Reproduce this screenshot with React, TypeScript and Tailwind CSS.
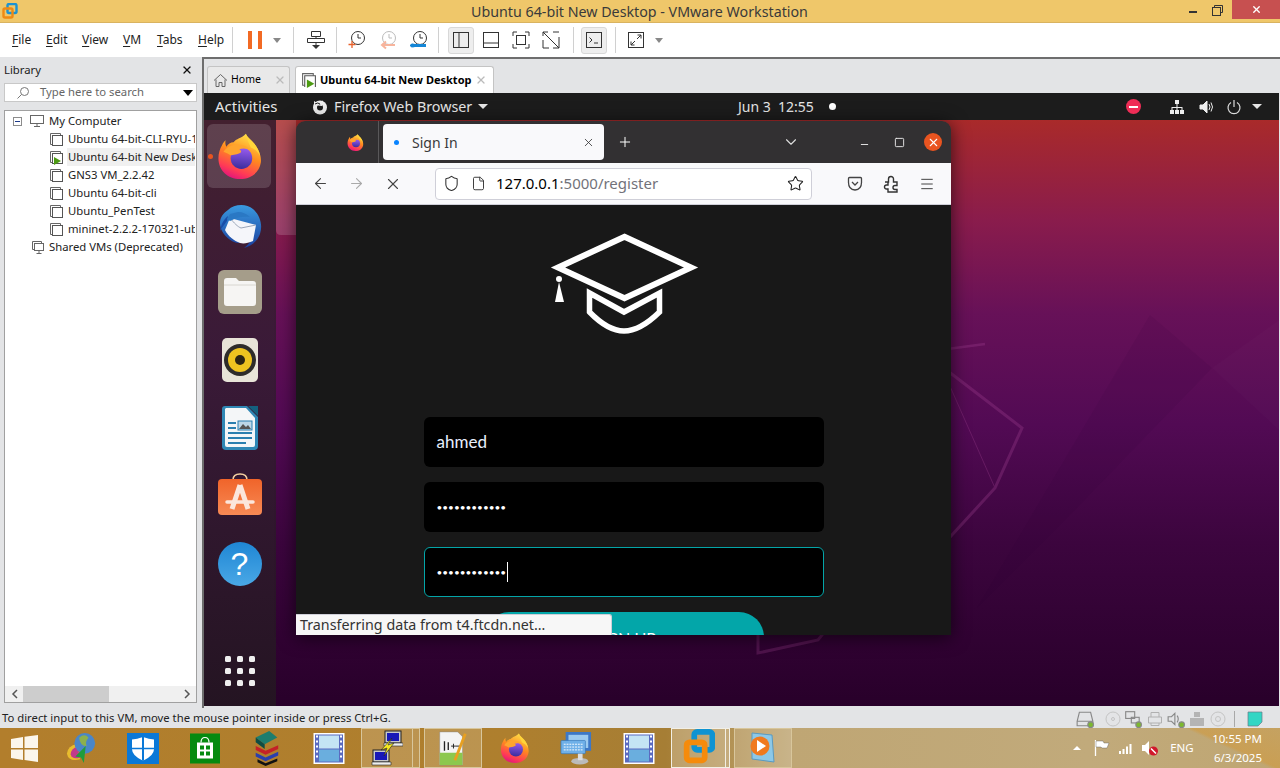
import React from "react";
import { ArrowLeft, ArrowRight, X, Star, Shield, File, Menu, ChevronDown, Plus, Minus, Square } from "lucide-react";

const UI = "font-['Noto_Sans','Open_Sans',sans-serif]";

function FirefoxLogo({ size }: { size: number }) {
  return (
    <svg width={size} height={size} viewBox="0 0 64 64" className="shrink-0">
      <defs>
        <linearGradient id="ffa" x1="0.7" y1="0" x2="0.3" y2="1">
          <stop offset="0" stopColor="#ffe14a" />
          <stop offset="0.45" stopColor="#ff8a1f" />
          <stop offset="0.8" stopColor="#ff3a56" />
          <stop offset="1" stopColor="#e0127f" />
        </linearGradient>
        <linearGradient id="ffb" x1="0.5" y1="0" x2="0.4" y2="1">
          <stop offset="0" stopColor="#9a5cf0" />
          <stop offset="1" stopColor="#3a2d9c" />
        </linearGradient>
      </defs>
      <path d="M40 1c3 6 8 9 12 14 6 8 10 17 9 26-2 14-14 23-29 23C15 64 2 52 2 35c0-7 2-13 5-18 1-3 3-5 5-7-1 4 0 7 1 9 2-3 6-6 10-6 3-5 12-6 17-12z" fill="url(#ffa)" />
      <circle cx="34" cy="35" r="15" fill="url(#ffb)" />
      <path d="M9 26c4-6 11-10 20-10 7 0 14 3 19 9-6-4-13-4-17-2 3 1 3 3 2 4-4 3-11 3-14 4-3-2-7-4-10-5z" fill="#ffa52e" />
      <path d="M40 1c3 6 8 9 12 14 4 5 7 11 8 17-3-6-8-10-13-12-3-7-6-12-7-19z" fill="#ffd53a" />
    </svg>
  );
}

function VmIcon({ play }: { play?: boolean }) {
  return (
    <svg width="15" height="15" viewBox="0 0 15 15" className="shrink-0">
      <path d="M3.5 12.5H1.500V1.500H11.500V3.500" fill="none" stroke="#666" />
      <rect x="3.500" y="3.500" width="10" height="10" fill="#fff" stroke="#555" />
      {play && <path d="M5 7l7 4-7 4z" fill="#4c9a12" />}
    </svg>
  );
}

function TreeRow({ label, play, hi }: { label: string; play?: boolean; hi?: boolean }) {
  return (
    <div className="flex h-[18px] items-center pl-[44px]">
      <VmIcon play={play} />
      <div className={`ml-[3px] flex h-full w-[128px] items-center overflow-hidden whitespace-nowrap pl-[1px] ${hi ? "bg-[#f0f0f0]" : ""}`}>{label}</div>
    </div>
  );
}

function Sep({ cls = "mx-[10px]" }: { cls?: string }) {
  return <div className={`h-[26px] w-px shrink-0 bg-[#d0d0d0] ${cls}`} />;
}

function Caret() {
  return <div className="h-0 w-0 border-x-[4px] border-t-[5px] border-x-transparent border-t-[#888]" />;
}

function Clock({ color, tool }: { color: string; tool: "plus" | "back" | "wrench" }) {
  return (
    <svg width="20" height="20" viewBox="0 0 20 20" className="shrink-0">
      <circle cx="11" cy="8" r="6.500" fill="none" stroke={tool === "back" ? "#bbb" : "#333"} />
      <path d="M11 4v4h3" fill="none" stroke={tool === "back" ? "#bbb" : "#333"} />
      {tool === "plus" && <path d="M5 11v7M1.500 14.500h7" stroke={color} strokeWidth="1.300" />}
      {tool === "back" && <path d="M17 15H5m3-3.500L4 15l4 3.500" fill="none" stroke={color} strokeWidth="2" />}
      {tool === "wrench" && <path d="M1 15c2-2 3-1.500 5-1h11v3H6c-2 .5-3 1-5-1z" fill={color} />}
    </svg>
  );
}

function ViewBtn({ active, children }: { active?: boolean; children: React.ReactNode }) {
  return (
    <div className={`flex h-[27px] w-[26px] shrink-0 items-center justify-center rounded-[3px] ${active ? "border border-[#d8d8d8] bg-[#eeeeee]" : ""}`}>
      <svg width="18" height="18" viewBox="0 0 18 18" fill="none" stroke="#333">{children}</svg>
    </div>
  );
}

function TitleBar() {
  return (
    <div className="flex h-[23px] shrink-0 items-start border-b border-[#d9b360] bg-[#efc76a]">
      <svg width="16" height="16" viewBox="0 0 16 16" className="ml-[2px] mt-[3px] shrink-0">
        <rect x="5.500" y="1" width="9" height="9" rx="1.500" fill="none" stroke="#1c93d2" strokeWidth="2.400" />
        <rect x="1.500" y="5.500" width="9" height="9" rx="1.500" fill="none" stroke="#f08a12" strokeWidth="2.400" />
      </svg>
      <div className={`${UI} flex-1 pl-[72px] text-center text-[14.250px] leading-[23px] text-[#3a3a3a]`}>Ubuntu 64-bit New Desktop - VMware Workstation</div>
      <div className="flex items-start">
        <div className="mr-[15px] mt-[11px] h-[2px] w-[8px] bg-[#333]" />
        <svg width="11" height="11" viewBox="0 0 11 11" className="mr-[9px] mt-[5px]" fill="none" stroke="#333">
          <path d="M2.500 2.500V.5h8v7H8.500" />
          <rect x=".5" y="2.500" width="8" height="8" />
        </svg>
        <div className="flex h-[19px] w-[48px] items-center justify-center bg-[#c75050]">
          <X size={11} color="#fff" strokeWidth={3} />
        </div>
      </div>
    </div>
  );
}

function Toolbar() {
  const menus: [string, string][] = [["File", "w-[34px]"], ["Edit", "w-[36px]"], ["View", "w-[41px]"], ["VM", "w-[34px]"], ["Tabs", "w-[41px]"], ["Help", "w-[37px]"]];
  return (
    <div className="flex h-[34px] shrink-0 items-center bg-white pl-[12px]">
      <div className={`${UI} flex text-[12px] text-[#222]`}>
        {menus.map(([m, w]) => (
          <div key={m} className={w}>
            <span className="underline decoration-1 underline-offset-2 [text-decoration-skip-ink:none]">{m[0]}</span>
            {m.slice(1)}
          </div>
        ))}
      </div>
      <div className="mx-[-3px] h-[26px] w-px shrink-0 bg-[#d0d0d0]" />
      <div className="ml-[18px] flex h-[18px] gap-[6px]">
        <div className="w-[4px] bg-[#f26a24]" />
        <div className="w-[4px] bg-[#f26a24]" />
      </div>
      <div className="ml-[11px]"><Caret /></div>
      <Sep cls="ml-[12px] mr-[10px]" />
      <svg width="20" height="20" viewBox="0 0 20 20" className="ml-[2px] shrink-0">
        <path d="M5.500 1.500h9v5h-9zM1.500 8.500h17v4h-17zM10 6.500v2M10 12.500v4" fill="none" stroke="#333" />
        <path d="M6 15h8l-4 4z" fill="#333" />
      </svg>
      <Sep />
      <div className="flex items-center gap-[11px]">
        <Clock color="#e8622c" tool="plus" />
        <Clock color="#f7b49c" tool="back" />
        <Clock color="#1586d6" tool="wrench" />
      </div>
      <Sep cls="ml-[9px] mr-[9px]" />
      <div className="flex items-center gap-[4px]">
        <ViewBtn active><rect x="1.500" y="1.500" width="15" height="15" /><path d="M7 1.500v15" /></ViewBtn>
        <ViewBtn><rect x="1.500" y="1.500" width="15" height="15" /><path d="M1.500 12h15" /></ViewBtn>
        <ViewBtn><path d="M1 5V1h4M13 1h4v4M17 13v4h-4M5 17H1v-4" /><rect x="4.500" y="4.500" width="9" height="9" /></ViewBtn>
        <ViewBtn><path d="M1 5V1h5M17 6v11h-6M7 17H1V9M1 1l16 16M11 1h6" /></ViewBtn>
      </div>
      <Sep cls="ml-[9px] mr-[7px]" />
      <ViewBtn active><rect x="1.500" y="1.500" width="15" height="15" /><path d="M4.500 6.500l2.500 2.500-2.500 2.500M9 12h4" /></ViewBtn>
      <div className="mx-[8px] h-[26px] w-px shrink-0 bg-[#d0d0d0]" />
      <svg width="18" height="18" viewBox="0 0 18 18" fill="none" stroke="#333" className="ml-[3px] shrink-0">
        <rect x="1.500" y="1.500" width="15" height="15" />
        <path d="M4 14l4-4M4 10.500V14h3.500M14 4l-4 4M10.500 4H14v3.500" />
      </svg>
      <div className="ml-[10px]"><Caret /></div>
    </div>
  );
}

function Library() {
  return (
    <div className={`${UI} flex w-[197px] shrink-0 flex-col pb-[5px] pl-[4px] text-[11.300px] text-[#222]`}>
      <div className="flex h-[26px] shrink-0 items-center justify-between pr-[4px]">
        <span>Library</span>
        <X size={12} color="#111" strokeWidth={2.500} />
      </div>
      <div className="flex h-[19px] shrink-0 items-center border border-[#c8c8c8] bg-white">
        <svg width="14" height="14" viewBox="0 0 14 14" fill="none" stroke="#777" className="ml-[11px]"><circle cx="8.500" cy="5.500" r="4" /><path d="M5.500 8.500L1.500 12.500" /></svg>
        <span className="ml-[10px] flex-1 text-[#666]">Type here to search</span>
        <div className="mr-[3px] h-0 w-0 border-x-[5px] border-t-[6px] border-x-transparent border-t-black" />
      </div>
      <div className="mt-[8px] flex min-h-0 flex-1 flex-col border border-[#a0a0a0] bg-white">
        <div className="flex-1 pt-[1px]">
          <div className="flex h-[18px] items-center">
            <div className="ml-[8px] flex h-[9px] w-[9px] items-center justify-center border border-[#8c8c8c]"><div className="h-px w-[5px] bg-[#1c3a8a]" /></div>
            <svg width="16" height="14" viewBox="0 0 16 14" fill="none" stroke="#666" className="ml-[7px]"><rect x="1.500" y="1.500" width="13" height="8" /><path d="M5 12.500h6M8 9.500v3" /></svg>
            <span className="ml-[4px]">My Computer</span>
          </div>
          <TreeRow label="Ubuntu 64-bit-CLI-RYU-1" />
          <TreeRow label="Ubuntu 64-bit New Desktop" play hi />
          <TreeRow label="GNS3 VM_2.2.42" />
          <TreeRow label="Ubuntu 64-bit-cli" />
          <TreeRow label="Ubuntu_PenTest" />
          <TreeRow label="mininet-2.2.2-170321-ubuntu" />
          <div className="flex h-[18px] items-center pl-[26px]">
            <svg width="15" height="15" viewBox="0 0 15 15" fill="none" stroke="#666"><path d="M3.500 9.500h-2v-8h9v2" /><rect x="3.500" y="3.500" width="9" height="7" fill="#fff" /><path d="M5.500 13.500h5M8 10.500v3" /></svg>
            <span className="ml-[3px]">Shared VMs (Deprecated)</span>
          </div>
        </div>
        <div className="flex h-[16px] shrink-0 items-center bg-[#f0f0f0]">
          <svg width="8" height="10" viewBox="0 0 8 10" fill="none" stroke="#555" strokeWidth="1.500" className="ml-[6px]"><path d="M6 1L2 5l4 4" /></svg>
          <div className="ml-[4px] h-full w-[86px] bg-[#cdcdcd]" />
          <div className="flex-1" />
          <svg width="8" height="10" viewBox="0 0 8 10" fill="none" stroke="#555" strokeWidth="1.500" className="mr-[5px]"><path d="M2 1l4 4-4 4" /></svg>
        </div>
      </div>
    </div>
  );
}

function Tabs() {
  return (
    <div className={`${UI} flex h-[34px] shrink-0 items-end pl-[3px] text-[11px] text-black`}>
      <div className="flex h-[27px] w-[83px] items-center rounded-t-[3px] border border-b-0 border-[#c4c4c4] bg-[#e9e9e9] pl-[5px]">
        <svg width="15" height="15" viewBox="0 0 15 15" fill="none" stroke="#666"><path d="M1 7.500L7.500 1.500 14 7.500M3 6.500v7h3v-4h3v4h3v-7" /></svg>
        <span className="ml-[3px] text-[10.500px]">Home</span>
        <X size={12} color="#bbb" strokeWidth={2.500} className="ml-[13px]" />
      </div>
      <div className="ml-[5px] flex h-[27px] w-[199px] items-center rounded-t-[3px] border border-b-0 border-[#c4c4c4] bg-white pl-[5px]">
        <svg width="16" height="16" viewBox="0 0 15 15" className="shrink-0"><path d="M3.500 12.500H1.500V1.500H11.500V3.500" fill="none" stroke="#666" /><path d="M3.500 14V3.500h10V14" fill="none" stroke="#555" /><path d="M5.500 7l7 4-7 4z" fill="#4c9a12" /></svg>
        <span className="ml-[3px] whitespace-nowrap font-bold">Ubuntu 64-bit New Desktop</span>
        <X size={12} color="#bbb" strokeWidth={2.500} className="ml-[4px] shrink-0" />
      </div>
    </div>
  );
}

function GnomePanel() {
  return (
    <div className={`${UI} flex h-[27px] shrink-0 items-center bg-[#1c1c1c] text-[14.300px] text-[#e6e6e6]`}>
      <span className="ml-[11px] w-[97px] text-[15px]">Activities</span>
      <svg width="16" height="16" viewBox="0 0 16 16" className="shrink-0"><circle cx="8" cy="8.500" r="7" fill="#eee" /><circle cx="8" cy="8.500" r="3" fill="#1c1c1c" /><path d="M2 2l6 4 3-5-1 6-8-1z" fill="#eee" /><path d="M3 5q3-2 5 0" stroke="#1c1c1c" fill="none" /></svg>
      <span className="ml-[6px] w-[144px] whitespace-nowrap">Firefox Web Browser</span>
      <div className="h-0 w-0 border-x-[5px] border-t-[5px] border-x-transparent border-t-[#e6e6e6]" />
      <span className="ml-[250px] w-[91px] whitespace-nowrap text-[14px]">Jun 3 &nbsp;12:55</span>
      <div className="h-[7px] w-[7px] rounded-full bg-white" />
      <div className="ml-[290px] flex h-[15px] w-[15px] items-center justify-center rounded-full bg-[#ef2d56]"><div className="h-[2px] w-[9px] bg-white" /></div>
      <svg width="16" height="16" viewBox="0 0 16 16" fill="#eee" className="ml-[28px] shrink-0"><path d="M6 1h4v4H6zM1 11h4v4H1zM6 11h4v4H6zM11 11h4v4h-4zM7.500 5h1v3h5v3h-1V9H8.500v2h-1V9H3.500v2h-1V8h5z" /></svg>
      <svg width="16" height="16" viewBox="0 0 16 16" className="ml-[14px] shrink-0" fill="none" stroke="#eee"><path d="M1 6h3l4-4v12l-4-4H1z" fill="#eee" /><path d="M10 5q2 3 0 6M12 3.500q3 4.500 0 9" /></svg>
      <svg width="16" height="16" viewBox="0 0 16 16" className="ml-[11px] shrink-0" fill="none" stroke="#ddd" strokeWidth="1.200"><path d="M5 3.500a6 6 0 1 0 6 0M8 1v7" /></svg>
      <div className="ml-[10px] h-0 w-0 border-x-[5px] border-t-[5px] border-x-transparent border-t-[#e6e6e6]" />
    </div>
  );
}

function DockSlot({ h, children, active }: { h: string; children: React.ReactNode; active?: boolean }) {
  return (
    <div className={`relative flex w-full items-center justify-center pr-[1px] ${h}`}>
      {active && <div className="absolute left-[3px] top-0 h-[64px] w-[64px] rounded-[6px] bg-[#ffffff26]" />}
      {active && <div className="absolute left-[4px] top-[30px] h-[5px] w-[5px] rounded-full bg-[#e95420]" />}
      <div className="relative">{children}</div>
    </div>
  );
}

function Dock() {
  return (
    <div className="flex w-[72px] shrink-0 flex-col items-center bg-[linear-gradient(180deg,#43202f_0%,#3a1a38_40%,#241422_100%)] pt-[4px]">
      <DockSlot h="h-[64px]" active><FirefoxLogo size={46} /></DockSlot>
      <DockSlot h="h-[76px]">
        <svg width="48" height="48" viewBox="0 0 48 48">
          <defs><linearGradient id="tb" x1="0" y1="0" x2="0" y2="1"><stop offset="0" stopColor="#3a9ae0" /><stop offset="1" stopColor="#1a3f9e" /></linearGradient></defs>
          <path d="M12 8C18 2 30 1 37 7c7 6 10 16 7 25-3 8-10 13-16 14 5-4 10-10 10-18-3 6-10 11-16 13-7-1-14-7-17-14C2 18 6 12 12 8z" fill="url(#tb)" />
          <path d="M4 29c1-6 3-11 8-15l-1 5c-2 3-5 6-7 10z" fill="#1a4ea8" />
          <path d="M14 16l26 7-3 16c-5 2-9 3-13 2-6-2-12-7-15-13l5-12z" fill="#f5f6fa" />
          <path d="M14 16c4 5 8 9 11 10l15-3" fill="none" stroke="#9aa6b8" />
          <path d="M11 17l3-5 8-2c5 0 9 2 12 5-7-1-13 0-20 4z" fill="#2a78c4" />
        </svg>
      </DockSlot>
      <DockSlot h="h-[56px]">
        <div className="flex h-[44px] w-[44px] items-center justify-center rounded-[6px] bg-[#a59d8a]">
          <svg width="32" height="28" viewBox="0 0 32 28"><path d="M0 3q0-3 3-3h9l3 3h14q3 0 3 3v19q0 3-3 3H3q-3 0-3-3z" fill="#f6f5f3" /><path d="M0 7h32" stroke="#d8d6d0" /></svg>
        </div>
      </DockSlot>
      <DockSlot h="h-[80px]">
        <div className="flex h-[44px] w-[36px] items-center justify-center rounded-[5px] bg-[#e8e4d8]">
          <div className="flex h-[32px] w-[32px] items-center justify-center rounded-full bg-[#2e2c2a]">
            <div className="flex h-[24px] w-[24px] items-center justify-center rounded-full bg-[#eec320]"><div className="h-[10px] w-[10px] rounded-full bg-[#2b2414]" /></div>
          </div>
        </div>
      </DockSlot>
      <DockSlot h="h-[56px]">
        <svg width="36" height="44" viewBox="0 0 36 44">
          <path d="M3 0h22l11 11v29q0 4-4 4H4q-4 0-4-4V3q0-3 3-3z" fill="#2f87b5" />
          <path d="M4 2h20l9 10v27q0 2-2 2H5q-2 0-2-2V3z" fill="#f4f6f8" />
          <path d="M26 0h10v10z" fill="#14607f" />
          <path d="M6 16h8v2H6zM6 21h8v2H6zM6 26h24v2H6zM6 31h24v2H6zM6 36h18v2H6z" fill="#2a7fb0" />
          <rect x="16" y="15" width="14" height="9" fill="#bcd7e8" stroke="#2a7fb0" /><path d="M17 23l4-5 3 3 2-2 3 4z" fill="#555" />
        </svg>
      </DockSlot>
      <DockSlot h="h-[78px]">
        <svg width="44" height="44" viewBox="0 0 44 44">
          <defs><linearGradient id="sw" x1="0" y1="0" x2="0" y2="1"><stop offset="0" stopColor="#f0642a" /><stop offset="1" stopColor="#f78a55" /></linearGradient></defs>
          <path d="M15 7q0-6 7-6t7 6" fill="none" stroke="#f4d0a0" strokeWidth="1.600" />
          <rect x="0" y="6" width="44" height="36" rx="4" fill="url(#sw)" />
          <path d="M22 12l-8 24M22 12l8 24" stroke="#fbe6dc" strokeWidth="5" fill="none" />
          <path d="M9 29h26" stroke="#fbe6dc" strokeWidth="3.500" strokeLinecap="round" />
        </svg>
      </DockSlot>
      <DockSlot h="h-[60px]">
        <div className="flex h-[44px] w-[44px] items-center justify-center rounded-full bg-[linear-gradient(180deg,#1f86d4,#4aa8e6)] text-[32px] leading-none text-white font-['Liberation_Sans',sans-serif]">?</div>
      </DockSlot>
      <div className="mt-auto mb-[20px] mr-[1px] grid grid-cols-3 gap-x-[6px] gap-y-[6px]">
        {Array.from({ length: 9 }).map((_, i) => (
          <div key={i} className="h-[6px] w-[6px] rounded-[1.500px] bg-[#efefef]" />
        ))}
      </div>
    </div>
  );
}

function Wallpaper() {
  return (
    <svg className="absolute inset-0 h-full w-full" viewBox="276 120 1003 586" preserveAspectRatio="none">
      <path d="M1150 315L1212 368 1067 518 977 608z" fill="#2a0030" opacity=".08" />
      <path d="M1212 368L1279 320V430z" fill="#ffffff" opacity=".015" />
      <g fill="none" stroke="#a04090" opacity=".32">
        <path d="M940 350L985 344" strokeWidth="2.500" />
        <path d="M940 365L1022 428 995 488 940 548" strokeWidth="3" />
        <path d="M945 375L995 488" strokeWidth="1" />
      </g>
      <path d="M758 630V653L818 640 826 630" fill="none" stroke="#a04090" opacity=".28" strokeWidth="3" />
      <path d="M276 120h20v115h-15q-5 0-5-5z" fill="#ffffff" opacity=".17" />
    </svg>
  );
}

function FirefoxWindow() {
  return (
    <div className="absolute left-[20px] top-[1px] flex h-[514px] w-[655px] flex-col overflow-hidden rounded-t-[9px] shadow-[0_2px_18px_rgba(0,0,0,0.65)]">
      <div className={`${UI} flex h-[42px] shrink-0 items-center bg-[#323032]`}>
        <div className="flex h-full w-[83px] items-center justify-end border-r border-[#5a585a] pr-[14px]">
          <FirefoxLogo size={17} />
        </div>
        <div className="ml-[4px] flex h-[36px] w-[221px] items-center rounded-[4px] bg-[#f9f9fb] pl-[11px] text-[14px] text-[#3a3a3a]">
          <div className="h-[5px] w-[5px] rounded-full bg-[#0a84ff]" />
          <span className="ml-[13px] flex-1">Sign In</span>
          <X size={13} color="#333" strokeWidth={1.500} className="mr-[9px]" />
        </div>
        <Plus size={16} color="#fff" strokeWidth={1.500} className="ml-[13px]" />
        <ChevronDown size={18} color="#ddd" strokeWidth={1.500} className="ml-[149px]" />
        <Minus size={11} color="#eee" strokeWidth={2} className="ml-[59px] mt-[5px]" />
        <Square size={11} color="#eee" strokeWidth={2} className="ml-[24px]" />
        <div className="ml-[19px] flex h-[18px] w-[18px] items-center justify-center rounded-full bg-[#e95420]">
          <X size={13} color="#fff" strokeWidth={2} />
        </div>
      </div>
      <div className={`${UI} flex h-[42px] shrink-0 items-center border-b border-[#cfcfd8] bg-[#f9f9fb]`}>
        <ArrowLeft size={17} color="#444" strokeWidth={1.500} className="ml-[16px]" />
        <ArrowRight size={17} color="#aaa" strokeWidth={1.500} className="ml-[19px]" />
        <X size={18} color="#444" strokeWidth={1.500} className="ml-[19px]" />
        <div className="ml-[33px] flex h-[32px] w-[377px] items-center rounded-[4px] border border-[#cfcfd8] bg-white pl-[7px]">
          <Shield size={17} color="#333" strokeWidth={1.500} />
          <File size={15} color="#333" strokeWidth={1.500} className="ml-[11px]" />
          <span className="ml-[10px] text-[15px] text-black">127.0.0.1<span className="text-[#72727a]">:5000/register</span></span>
          <Star size={17} color="#222" strokeWidth={1.500} className="ml-auto mr-[7px]" />
        </div>
        <svg width="16" height="16" viewBox="0 0 16 16" fill="none" stroke="#444" strokeWidth="1.300" className="ml-[35px]"><path d="M2.500 1.500h11q1 0 1 1v4q0 7-6.500 7.500Q1.500 13.500 1.500 6.500v-4q0-1 1-1z" /><path d="M5 6l3 3 3-3" /></svg>
        <svg width="17" height="18" viewBox="0 0 17 18" fill="none" stroke="#333" strokeWidth="1.400" className="ml-[20px]"><path d="M2 7h3.500V4a2.500 2.500 0 0 1 5 0v3H14v3.500h-2a2 2 0 0 0 0 4h2V17H5v-3H3.500a2 2 0 0 1 0-4H5V7" /></svg>
        <Menu size={16} color="#444" strokeWidth={1.500} className="ml-[19px]" />
      </div>
      <div className="relative flex min-h-0 flex-1 flex-col items-center overflow-hidden bg-[#181818] pt-[27px] font-['Lato',sans-serif]">
        <svg width="151" height="102" viewBox="548 232 151 102" className="shrink-0">
          <path d="M624.500 236.800L691 267.500 624.500 298.200 558 267.500z" fill="none" stroke="#fff" strokeWidth="6" />
          <circle cx="559" cy="279" r="3" fill="#fff" />
          <path d="M559 282L555 302H564z" fill="#fff" />
          <path d="M589.500 293L624 312 659.500 293V312Q640 331 624 331 608 331 589.500 312z" fill="none" stroke="#fff" strokeWidth="5.500" />
        </svg>
        <div className="mt-[83px] flex h-[50px] w-[400px] shrink-0 items-center rounded-[6px] bg-black pl-[13px] text-[17px] text-[#e8f0fe]">ahmed</div>
        <div className="mt-[15px] flex h-[50px] w-[400px] shrink-0 items-center rounded-[6px] bg-black pl-[13px] text-[10px] text-white">••••••••••••</div>
        <div className="mt-[15px] flex h-[50px] w-[400px] shrink-0 items-center rounded-[6px] border border-[#04a5a8] bg-black pl-[12px] text-[10px] text-white">
          <span>••••••••••••</span>
          <div className="ml-[1px] h-[20px] w-px bg-white" />
        </div>
        <div className="mt-[15px] flex h-[50px] w-[280px] shrink-0 justify-center rounded-[30px] bg-[#03a6a9] pl-[2px] pt-[14px] text-[16px] text-white">SIGN UP</div>
        <div className={`${UI} absolute bottom-0 left-0 flex h-[21px] w-[316px] items-center rounded-tr-[3px] border-r border-t border-[#cfcfd8] bg-[#f7f7f7] pl-[4px] text-[14.300px] text-[#333]`}>Transferring data from t4.ftcdn.net…</div>
      </div>
    </div>
  );
}

function StatusIcons() {
  const dot = <circle cx="13" cy="13" r="2.500" fill="#7cb82f" />;
  return (
    <div className="mt-[2px] flex items-center pr-[17px]">
      <svg width="18" height="18" viewBox="0 0 16 16" fill="none" stroke="#888"><path d="M3 2h10l2 8v4H1v-4zM1 10h14" />{dot}</svg>
      <svg width="16" height="16" viewBox="0 0 16 16" fill="none" stroke="#c4c4c4" className="ml-[11px]"><circle cx="8" cy="8" r="7" /><circle cx="8" cy="8" r="1.500" /></svg>
      <svg width="18" height="18" viewBox="0 0 16 16" fill="none" stroke="#888" className="ml-[3px]"><rect x="1.500" y="1.500" width="8" height="6" /><rect x="6.500" y="6.500" width="7" height="5" />{dot}</svg>
      <svg width="16" height="16" viewBox="0 0 16 16" fill="none" stroke="#b0b0b0" className="ml-[5px]"><path d="M4 6V1.500h8V6M1.500 6h13v6h-13zM4 12v2.500h8V12" /></svg>
      <svg width="18" height="18" viewBox="0 0 16 16" fill="none" stroke="#888" className="ml-[4px]"><path d="M1 6h3l3-3v10l-3-3H1zM9 5q2 3 0 6" />{dot}</svg>
      <svg width="16" height="16" viewBox="0 0 16 16" fill="#b4b4b4" className="ml-[4px]"><path d="M5 1h6v5H5zM1 7h14v8H1z" /></svg>
      <svg width="16" height="16" viewBox="0 0 16 16" fill="none" stroke="#c4c4c4" className="ml-[5px]"><circle cx="8" cy="8" r="7" /><circle cx="8" cy="8" r="2.500" /></svg>
      <div className="ml-[8px] h-[16px] w-px bg-[#a8a8a8]" />
      <svg width="16" height="16" viewBox="0 0 16 16" className="ml-[12px]"><path d="M1 1h14v10l-4 4H1z" fill="#33d6c4" stroke="#6a7a88" strokeWidth=".7" /></svg>
    </div>
  );
}

function StatusBar() {
  return (
    <div className={`${UI} flex h-[20px] shrink-0 items-center justify-between bg-[#e3e4e6] pl-[2px] text-[11.300px] text-[#222]`}>
      <span>To direct input to this VM, move the mouse pointer inside or press Ctrl+G.</span>
      <StatusIcons />
    </div>
  );
}

function Film({ cls }: { cls: string }) {
  return (
    <svg width="32" height="33" viewBox="0 0 32 32" className={`shrink-0 ${cls}`}>
      <rect x=".5" y=".5" width="31" height="31" fill="#fff" />
      <rect x="2" y="2" width="28" height="28" fill="#5a6ac0" />
      <rect x="6" y="3" width="20" height="13" fill="#c4e4f4" />
      <rect x="6" y="17" width="20" height="12" fill="#6aaede" />
      <path d="M3 4h2M3 9h2M3 14h2M3 19h2M3 24h2M27 4h2M27 9h2M27 14h2M27 19h2M27 24h2" stroke="#fff" strokeWidth="2" />
    </svg>
  );
}

function TaskBox({ w, extra, bright, children }: { w: string; extra?: string; bright?: boolean; children: React.ReactNode }) {
  const c = bright ? "border-[#f2efe6] bg-[#ffffff40]" : "border-[#d8c69c] bg-[#ffffff2a]";
  return (
    <div className="flex h-full shrink-0">
      <div className={`flex h-full items-center justify-center border ${c} ${w}`}>{children}</div>
      {extra && <div className={`h-full border-y border-r ${c} ${extra}`} />}
    </div>
  );
}

function Taskbar() {
  return (
    <div className={`${UI} relative flex h-[40px] shrink-0 items-center bg-[linear-gradient(90deg,#b27e2c_0%,#ae7f2e_40%,#a67e35_52%,#bfa674_62%,#c1aa7b_85%,#bfa672_100%)]`}>
      <svg width="27" height="27" viewBox="0 0 27 27" className="ml-[11px] shrink-0" fill="#fbf6ec"><path d="M0 4l12-2v11H0zM13.500 1.800L27 0v13H13.500zM0 14.500h12V25L0 23zM13.500 14.500H27V27l-13.500-2z" /></svg>
      <svg width="32" height="32" viewBox="0 0 34 34" className="ml-[27px] shrink-0">
        <path d="M2 23a11 11 0 0 1 10-10l4 16Q4 32 2 23z" fill="#e8bc2e" />
        <path d="M6 24a8 8 0 0 1 7-8l3 11Q8 30 6 24z" fill="#c13a8a" />
        <circle cx="21" cy="12" r="11" fill="#4a86c8" /><path d="M15 6q6-5 10 0-4 4-2 9-7 0-8-9z" fill="#8cb04e" />
        <path d="M22 15l-2 18-3-6-6-1z" fill="#1f9c3c" />
      </svg>
      <svg width="32" height="31" viewBox="0 0 32 38" preserveAspectRatio="none" className="ml-[30px] shrink-0">
        <rect width="32" height="38" fill="#0a78d7" />
        <path d="M16 5q6 3 11 3v12q0 8-11 14Q5 28 5 20V8q5 0 11-3z" fill="#fff" />
        <path d="M15 5h2v29h-2zM5 18h22v2H5z" fill="#0a78d7" />
      </svg>
      <svg width="30" height="31" viewBox="0 0 30 30" className="ml-[31px] shrink-0">
        <rect width="30" height="30" fill="#058a10" />
        <path d="M11 9q0-5 4-5t4 5" fill="none" stroke="#fff" strokeWidth="1.200" />
        <path d="M7 9h16v16H7z" fill="#fff" />
        <path d="M10 12h4v4h-4zM16 12h4v4h-4zM10 18h4v4h-4zM16 18h4v4h-4z" fill="#058a10" />
      </svg>
      <svg width="27" height="36" viewBox="0 0 30 38" preserveAspectRatio="none" className="ml-[33px] shrink-0">
        <path d="M3 8L18 1l9 7-14 7z" fill="#1d7d6e" />
        <path d="M3 8l10 7v5L3 13z" fill="#0e4d44" />
        <path d="M3 17l11 5 14-6v4l-14 6-11-5z" fill="#c42128" />
        <path d="M3 24l11 5 14-6v4l-14 6-11-5z" fill="#2a3fae" />
        <path d="M5 31l9 4 13-5v3l-13 5-9-4z" fill="#111" />
      </svg>
      <Film cls="ml-[33px]" />
      <div className="ml-[16px] flex h-full shrink-0">
        <TaskBox w="w-[52px]" extra="w-[7px]">
          <svg width="32" height="36" viewBox="0 0 32 36">
            <rect x="14" y="1" width="16" height="12" fill="#c8c8c8" stroke="#222" /><rect x="16" y="3" width="12" height="8" fill="#1818b8" />
            <rect x="2" y="20" width="16" height="12" fill="#c8c8c8" stroke="#222" /><rect x="4" y="22" width="12" height="8" fill="#1818b8" />
            <path d="M1 32h19v3H1zM13 13h19v3H13z" fill="#eee" stroke="#222" strokeWidth=".6" />
            <path d="M21 8l-11 12 6-2-3 8 10-13-6 2z" fill="#f4ea20" stroke="#222" strokeWidth=".6" />
          </svg>
        </TaskBox>
        <div className="w-[4px]" />
        <TaskBox w="w-[58px]">
          <svg width="30" height="36" viewBox="0 0 30 38">
            <path d="M1 2h19l5 5v30H1z" fill="#f4f4f4" stroke="#888" strokeWidth=".5" />
            <rect x="1" y="24" width="24" height="13" fill="#8cc84e" />
            <path d="M6 12v10M10 13v8" stroke="#222" strokeWidth="1.400" fill="none" />
            <path d="M13 17h5M15.500 14.500v5M18 17h5" stroke="#222" />
            <path d="M28 4L17 32" stroke="#e8a020" strokeWidth="3" />
          </svg>
        </TaskBox>
      </div>
      <div className="ml-[18px] shrink-0"><FirefoxLogo size={30} /></div>
      <svg width="32" height="34" viewBox="0 0 34 36" className="ml-[30px] shrink-0">
        <rect x="6" y="1" width="27" height="20" fill="#3d78c6" /><rect x="9" y="4" width="21" height="14" fill="#9ccbf0" />
        <rect x="1" y="10" width="26" height="14" rx="1" fill="#6fb0e8" stroke="#2b6cb0" strokeWidth=".6" />
        <path d="M4 14h20M4 17h20M4 20h20" stroke="#fff" strokeDasharray="2 1" />
        <ellipse cx="21" cy="32" rx="9" ry="3.500" fill="#bbb" /><path d="M19 24h5v7h-5z" fill="#ddd" />
      </svg>
      <Film cls="ml-[31px]" />
      <div className="ml-[16px] flex h-full shrink-0">
        <TaskBox w="w-[55px]" extra="w-[4px]" bright>
          <svg width="32" height="38" viewBox="0 0 32 40">
            <rect x="11" y="3" width="19" height="19" rx="3" fill="none" stroke="#0f93d2" strokeWidth="6" />
            <rect x="3" y="14" width="19" height="19" rx="3" fill="none" stroke="#f58b0b" strokeWidth="6" />
          </svg>
        </TaskBox>
        <div className="w-[4px]" />
        <TaskBox w="w-[58px]">
          <svg width="30" height="34" viewBox="0 0 30 34">
            <path d="M4 2l20 2 2 27-22-3z" fill="#8cc8e8" stroke="#5a9ac0" />
            <circle cx="12" cy="15" r="9.500" fill="#f07a1e" /><path d="M9 9l9 6-9 6z" fill="#fff" />
          </svg>
        </TaskBox>
      </div>
      <div className="absolute right-0 top-0 h-full w-[114px] bg-[linear-gradient(25deg,#d09a4000_52%,#d09a4099_56%,#d09a4055_100%)]" />
      <div className="relative ml-auto flex h-full items-center pr-[18px] text-[11.500px] text-white">
        <div className="h-0 w-0 border-x-[4px] border-b-[4px] border-x-transparent border-b-white" />
        <svg width="16" height="18" viewBox="0 0 16 18" className="ml-[13px]"><path d="M1.500 1v16" stroke="#fff" strokeWidth="1.300" /><path d="M2 2h7l1 2h5l-2 5H8L7 8H2z" fill="#fff" stroke="#555" strokeWidth=".4" /></svg>
        <svg width="16" height="14" viewBox="0 0 16 14" className="ml-[8px]" fill="#fff"><path d="M1 10h2v3H1zM4.500 8h2v5h-2zM8 5.500h2V13H8zM11.500 3h2v10h-2z" /></svg>
        <svg width="18" height="18" viewBox="0 0 18 18" className="ml-[7px]"><path d="M1 6h3l4-4v14l-4-4H1z" fill="#fff" /><circle cx="12.500" cy="12" r="4.500" fill="#d0182c" /><path d="M10 9.500l5 5" stroke="#fff" strokeWidth="1.500" /></svg>
        <span className="ml-[11px] w-[36px]">ENG</span>
        <div className="ml-[6px] flex flex-col items-end leading-[19px]">
          <span>10:55 PM</span>
          <span>6/3/2025</span>
        </div>
      </div>
    </div>
  );
}

export default function App() {
  return (
    <div className="flex h-[768px] w-[1280px] flex-col overflow-hidden bg-[#e3e4e6]">
      <TitleBar />
      <Toolbar />
      <div className="flex min-h-0 flex-1 flex-col">
        <div className="flex min-h-0 flex-1">
          <Library />
          <div className="ml-[5px] flex min-w-0 flex-1 flex-col border-l-2 border-t-2 border-[#6e6e6e] pr-[1px] pb-[2px]">
            <Tabs />
            <div className="flex min-h-0 flex-1 flex-col">
              <GnomePanel />
              <div className="flex min-h-0 flex-1">
                <Dock />
                <div className="relative min-w-0 flex-1 bg-[linear-gradient(180deg,#a92a2a_0%,#8a1c4c_17%,#671158_33%,#520a54_52%,#3c053e_72%,#28002a_100%)]">
                  <Wallpaper />
                  <FirefoxWindow />
                </div>
              </div>
            </div>
          </div>
        </div>
        <StatusBar />
      </div>
      <Taskbar />
    </div>
  );
}
